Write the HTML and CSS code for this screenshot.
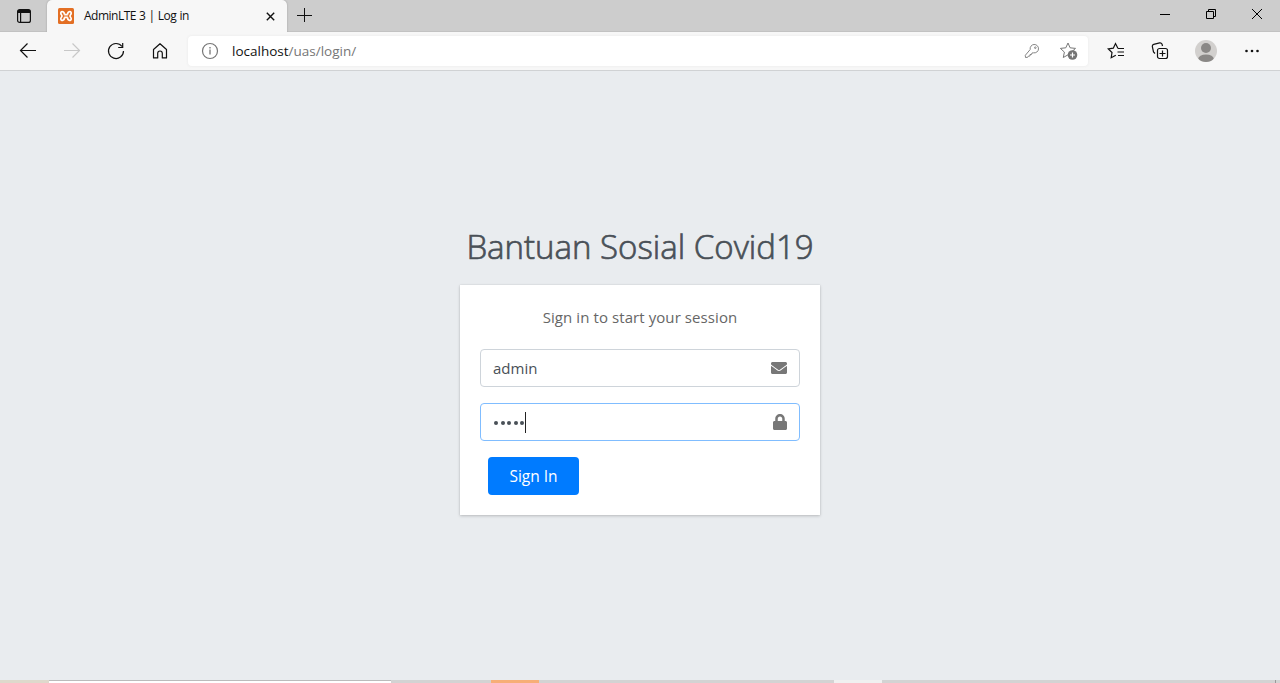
FILE: index.html
```html
<!DOCTYPE html>
<html lang="en">
<head>
<meta charset="utf-8">
<title>AdminLTE 3 | Log in</title>
<link rel="stylesheet" href="styles.css">
</head>
<body>
<div class="browser">
  <header class="tabstrip">
    <div class="tab-actions">
      <svg width="16" height="16" viewBox="0 0 16 16" fill="none" stroke="#111" stroke-width="1.2"><rect x="1.600" y="1.600" width="12.800" height="12.800" rx="2"/><path d="M2 3h12M2 4.200h12" stroke-width="1.800"/><path d="M4.600 5v9"/></svg>
    </div>
    <div class="tab">
      <svg class="favicon" width="16" height="16" viewBox="0 0 16 16"><rect width="16" height="16" rx="1.500" fill="#e36f24"/><path d="M6.200 6.600h3.600M6.200 9.400h3.600M6.300 6.600C6.800 3.600 3 2.500 2.800 5c-.1 1.500 1.200 1.800 1.200 3s-1.300 1.500-1.200 3c.2 2.500 4 1.400 3.500-1.600M9.700 6.600C9.200 3.600 13 2.500 13.200 5c.1 1.500-1.200 1.800-1.200 3s1.300 1.500 1.200 3c-.2 2.500-4 1.400-3.500-1.600" fill="none" stroke="#fff" stroke-width="1.700"/></svg>
      <span class="tab-title">AdminLTE 3 | Log in</span>
      <svg class="tab-close" width="9" height="9" viewBox="0 0 9 9" stroke="#111" stroke-width="1.400"><path d="M.8 .8l7.400 7.400M8.200 .8L.8 8.200"/></svg>
    </div>
    <svg class="new-tab" width="15" height="15" viewBox="0 0 15 15" stroke="#111"><path d="M7.500 0v14M0 7.500h15"/></svg>
    <div class="window-controls">
      <svg width="10" height="10" viewBox="0 0 10 10" fill="none" stroke="#000"><path d="M0 5.500h10"/></svg>
      <svg width="10" height="10" viewBox="0 0 10 10" fill="none" stroke="#000"><path d="M.5 2.500h7v7h-7zM2.500 2.500v-2h7v7h-2"/></svg>
      <svg width="10" height="10" viewBox="0 0 10 10" fill="none" stroke="#000"><path d="M0 0l10 10M10 0L0 10"/></svg>
    </div>
  </header>
  <nav class="toolbar">
    <div class="nav-buttons">
      <svg width="18" height="18" viewBox="0 0 18 18" fill="none" stroke="#111" stroke-width="1.200"><path d="M17 8.500H1.500M8.500 1.500l-7 7 7 7"/></svg>
      <svg width="18" height="18" viewBox="0 0 18 18" fill="none" stroke="#c8c8c8" stroke-width="1.200"><path d="M1 8.500h15.500M9.500 1.500l7 7-7 7"/></svg>
      <svg width="18" height="18" viewBox="0 0 18 18" fill="none" stroke="#111" stroke-width="1.200"><path d="M16.500 9A7.500 7.500 0 1 1 15 4.500M15.700 1v4.500h-4.500"/></svg>
      <svg width="18" height="18" viewBox="0 0 18 18" fill="none" stroke="#111" stroke-width="1.200" stroke-linejoin="round"><path d="M2.500 7.500L9 1.700l6.500 5.800v8.400h-4.200v-4.600a2.300 2.300 0 0 0-4.600 0v4.600H2.500z"/></svg>
    </div>
    <div class="address">
      <svg width="18" height="18" viewBox="0 0 18 18" fill="none" stroke="#767676" stroke-width="1.200"><circle cx="9" cy="9" r="7.500"/><path d="M9 7.500v5M9 5v1.400" stroke-width="1.300"/></svg>
      <span class="url"><b>localhost</b>/uas/login/</span>
      <svg class="key" width="16" height="16" viewBox="0 0 16 16" fill="none" stroke="#858585"><path d="M6.200 6.500A4.200 4.200 0 1 1 9.500 9.800L8 10l-.5 1.500H6V13H4.500l-.8 1.300-2.200.2-.2-2.200z"/><circle cx="11.300" cy="4.700" r=".8"/></svg>
      <svg width="20" height="20" viewBox="0 0 20 20"><path d="M9 2l2.100 4.800 5.400.6-4 3.600 1 5.400L9 13.800l-4.700 2.700 1.100-5.400-4-3.700 5.400-.6z" fill="none" stroke="#777"/><circle cx="13.500" cy="14" r="4.800" fill="#747474"/><path d="M13.500 11.500v5M11 14h5" stroke="#fff" stroke-width="1.200"/></svg>
    </div>
    <div class="tools">
      <svg width="18" height="18" viewBox="0 0 18 18" fill="none" stroke="#111" stroke-width="1.200"><path d="M11 6.500L8.500 1.600 6.300 6.200l-5 .7L5 10.500l-.8 5.200 4.600-2.500M11 6.500h6M10.500 10H17M11 13.500h6"/></svg>
      <svg width="18" height="18" viewBox="0 0 18 18" fill="none" stroke="#111" stroke-width="1.200"><rect x="6.500" y="6.500" width="10" height="10" rx="2"/><path d="M11.500 8.500v6M8.500 11.500h6M4 11.500L2.500 10 1.300 4.500a2 2 0 0 1 1.400-2.100l6-1.500a2 2 0 0 1 2.400 1.500l.4 1.600"/></svg>
      <svg class="avatar" width="22" height="22" viewBox="0 0 22 22"><defs><clipPath id="disc"><circle cx="11" cy="11" r="11"/></clipPath></defs><g clip-path="url(#disc)"><path d="M0 0h22v22H0z" fill="#d2d0ce"/><g fill="#8a8886"><circle cx="11" cy="8" r="5"/><ellipse cx="11" cy="19" rx="7.800" ry="4.600"/></g></g></svg>
      <svg class="more" width="16" height="16" viewBox="0 0 16 16" fill="#111"><circle cx="2.500" cy="8" r="1.300"/><circle cx="8" cy="8" r="1.300"/><circle cx="13.500" cy="8" r="1.300"/></svg>
    </div>
  </nav>
  <main class="login-page">
    <h1 class="login-logo">Bantuan Sosial Covid19</h1>
    <form class="card">
      <p class="login-msg">Sign in to start your session</p>
      <div class="field">
        <span class="value">admin</span>
        <svg width="16" height="16" viewBox="0 0 512 512" fill="#777"><path d="M502.300 190.800c3.900-3.100 9.700-.2 9.700 4.700V400c0 26.500-21.500 48-48 48H48c-26.500 0-48-21.500-48-48V195.600c0-5 5.700-7.800 9.700-4.700 22.400 17.400 52.100 39.500 154.100 113.600 21.100 15.400 56.700 47.800 92.200 47.600 35.700.3 72-32.800 92.300-47.600 102-74.100 131.600-96.300 154-113.700zM256 320c23.200.4 56.600-29.200 73.400-41.400 132.700-96.300 142.800-104.700 173.400-128.700 5.800-4.500 9.200-11.500 9.200-18.900v-19c0-26.500-21.500-48-48-48H48c-26.500 0-48 21.500-48 48v19c0 7.400 3.400 14.300 9.200 18.900 30.600 23.900 40.700 32.400 173.400 128.700 16.800 12.200 50.200 41.800 73.400 41.400z"/></svg>
      </div>
      <div class="field focused">
        <span class="dots"><i></i><i></i><i></i><i></i><i></i></span><span class="caret"></span>
        <svg width="14" height="16" viewBox="0 0 448 512" fill="#777"><path d="M400 224h-24v-72C376 68.200 307.800 0 224 0S72 68.200 72 152v72H48c-26.500 0-48 21.500-48 48v192c0 26.500 21.500 48 48 48h352c26.500 0 48-21.500 48-48V272c0-26.500-21.500-48-48-48zm-104 0H152v-72c0-39.700 32.300-72 72-72s72 32.300 72 72v72z"/></svg>
      </div>
      <button class="submit" type="button"><span>Sign In</span></button>
    </form>
  </main>
  <footer class="taskbar">
    <div class="start"></div><div class="search"></div><div class="gap-a"></div><div class="app-orange"></div><div class="gap-b"></div><div class="app-active"></div><div class="tray"></div>
  </footer>
</div>
</body>
</html>
```
FILE: styles.css
```css
* { box-sizing: border-box; }
body { margin: 0; font-family: "Open Sans", "Noto Sans", sans-serif; overflow: hidden; }
svg { display: block; flex: none; }
.browser { width: 1280px; height: 683px; display: flex; flex-direction: column; background: #e9ecef; }
.tabstrip { height: 32px; flex: none; display: flex; background: #cdcdcd; border-bottom: 1px solid #c2c2c2; }
.tab-actions { width: 47px; padding: 8px 0 0 16px; }
.tab { width: 240px; height: 32px; display: flex; align-items: center; padding: 0 12px 0 11px; background: #f7f7f7; border-radius: 5px 5px 0 0; box-shadow: 0 0 2px #999; clip-path: inset(0 -3px 0 -3px); }
.tab-title { margin-left: 10px; padding-bottom: 1px; font-size: 12px; letter-spacing: -0.500px; word-spacing: 0.500px; color: #111; white-space: nowrap; }
.tab-close { margin-left: auto; }
.new-tab { margin: 8px 0 0 10px; }
.window-controls { display: flex; gap: 36px; margin: 9px 18px 0 auto; }
.toolbar { height: 39px; flex: none; display: flex; align-items: center; background: #f7f7f7; border-bottom: 1px solid #d0d2d4; padding: 0 0 0 19px; }
.nav-buttons { display: flex; flex: none; gap: 26px; width: 169px; }
.address { width: 900px; flex: none; height: 30px; display: flex; align-items: center; background: #fff; border-radius: 4px; padding: 0 9px 0 13px; box-shadow: 0 0 3px #e8e8e8; }
.url { margin-left: 13px; font-size: 13.500px; color: #767676; }
.url b { font-weight: 400; color: #111; }
.key { margin: 0 19px 0 auto; }
.tools { display: flex; align-items: center; margin-left: 19px; gap: 26px; }
.more { margin-left: 1px; }
.login-page { flex: 1; display: flex; flex-direction: column; align-items: center; padding-top: 151px; }
.login-logo { margin: 0 0 13px; height: 50px; line-height: 50px; font-size: 33px; font-weight: 300; -webkit-text-stroke: 0.700px #495057; color: #495057; white-space: nowrap; }
.card { width: 360px; height: 230px; padding: 20px; background: #fff; box-shadow: 0 0 1px rgba(0,0,0,.13), 0 1px 3px rgba(0,0,0,.2); }
.login-msg { margin: 0 0 20px; height: 24px; line-height: 24px; text-align: center; font-size: 15px; letter-spacing: 0.080px; color: #666; white-space: nowrap; }
.field { height: 38px; margin-bottom: 16px; display: flex; align-items: center; border: 1px solid #ced4da; border-radius: 4px; padding: 0 12px; color: #495057; }
.field svg { margin-left: auto; }
.focused { border-color: #80bdff; }
.value { font-size: 15px; }
.dots { display: flex; gap: 2.500px; padding: 2px 0 0 1px; }
.dots i { width: 4px; height: 4px; border-radius: 50%; background: #495057; }
.caret { width: 1px; height: 21px; margin-left: 1px; background: #222; }
.submit { display: block; width: 91px; height: 38px; margin-left: 8px; padding: 0; border: 0; border-radius: 4px; background: #007bff; color: #fff; font: 15.500px "Open Sans", sans-serif; }
.taskbar { height: 3px; flex: none; display: flex; background: #d3d3d3; }
.start { width: 49px; background: #ded9cc; }
.search { width: 342px; background: #fff; border-top: 1px solid #bbb; }
.gap-a { width: 100px; }
.app-orange { width: 48px; background: #f7ae77; }
.gap-b { width: 295px; }
.app-active { width: 48px; background: #f0f0f0; }
.tray { width: 394px; border-right: 1px solid #999; }
```
